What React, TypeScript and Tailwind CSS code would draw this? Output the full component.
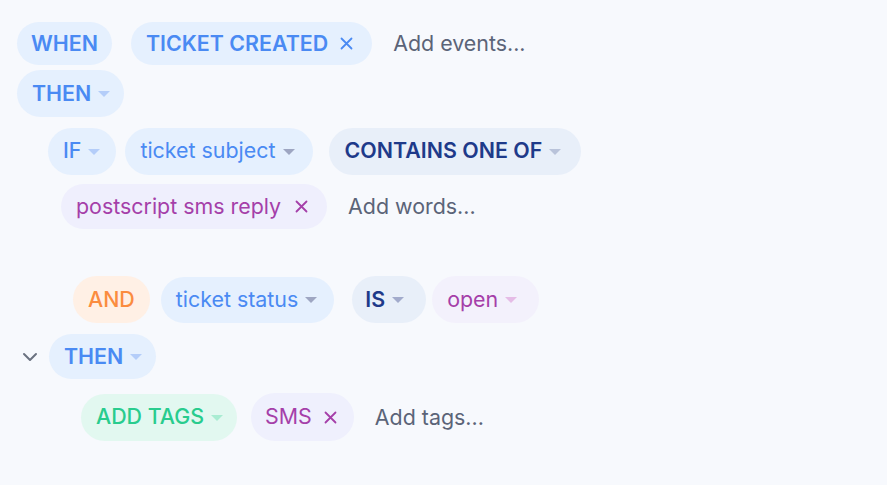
import React from "react";

const Caret = ({ color }: { color: string }) => (
  <svg width="12" height="6" viewBox="0 0 12 6" className="ml-[7px] mt-[1px]">
    <path d="M0 0 L12 0 L6 6 Z" fill={color} />
  </svg>
);

const X = ({ color, gap = "ml-[12px]" }: { color: string; gap?: string }) => (
  <svg width="13" height="13" viewBox="0 0 13 13" className={gap}>
    <path d="M1.5 1.5 L11.5 11.5 M11.5 1.5 L1.5 11.5" stroke={color} strokeWidth="1.8" strokeLinecap="round" />
  </svg>
);

type PillProps = {
  children: React.ReactNode;
  className: string;
};

const Pill = ({ children, className }: PillProps) => (
  <div className={"flex items-center rounded-full text-[21.4px] leading-none whitespace-nowrap " + className}>
    {children}
  </div>
);

export default function App() {
  return (
    <div className="min-h-screen w-full bg-[#f7f9fd] font-['Inter',sans-serif] pt-[22px] relative">
      {/* Row 1 */}
      <div className="flex items-center ml-[17px] h-[43px]">
        <Pill className="h-[43px] px-[14px] bg-[#e5f0fe] text-[#4a8af3] font-semibold">WHEN</Pill>
        <Pill className="ml-[19px] h-[43px] pl-[15px] pr-[19px] bg-[#e5f0fe] text-[#4a8af3] font-semibold">
          TICKET CREATED
          <X color="#4a8af3" />
        </Pill>
        <span className="ml-[21px] text-[21.4px] text-[#5b6478]">Add events...</span>
      </div>
      {/* Row 2 */}
      <div className="flex items-center ml-[17px] mt-[5px]">
        <Pill className="h-[47px] pl-[15px] pr-[14px] bg-[#e5f0fe] text-[#4a8af3] font-semibold">
          THEN
          <Caret color="#b4cdf9" />
        </Pill>
      </div>
      {/* Row 3 */}
      <div className="flex items-center ml-[48px] mt-[10px] h-[48px]">
        <Pill className="h-[47px] pl-[15px] pr-[16px] bg-[#e5f0fe] text-[#4a8af3] font-medium">
          IF
          <Caret color="#b4cdf9" />
        </Pill>
        <Pill className="ml-[9px] h-[47px] pl-[15px] pr-[18px] bg-[#e5f0fe] text-[#4a8af3] font-normal">
          ticket subject
          <Caret color="#9ea6c2" />
        </Pill>
        <Pill className="ml-[16px] h-[47px] pl-[16px] pr-[20px] bg-[#e8eff9] text-[#1e3a8a] font-semibold">
          CONTAINS ONE OF
          <Caret color="#b9c3da" />
        </Pill>
      </div>
      {/* Row 4 */}
      <div className="flex items-center ml-[61px] mt-[9px]">
        <Pill className="h-[45px] pl-[15px] pr-[19px] bg-[#efeffd] text-[#a53fa9] font-normal">
          postscript sms reply
          <X color="#a53fa9" gap="ml-[14px]" />
        </Pill>
        <span className="ml-[21px] text-[21.4px] text-[#5b6478]">Add words...</span>
      </div>
      {/* Row 5 */}
      <div className="flex items-center ml-[73px] mt-[47px]">
        <Pill className="h-[47px] px-[15px] bg-[#fff0e5] text-[#fb8c3f] font-medium">AND</Pill>
        <Pill className="ml-[11px] h-[46px] pl-[15px] pr-[17px] bg-[#e5f0fe] text-[#4a8af3] font-normal">
          ticket status
          <Caret color="#9ea6c2" />
        </Pill>
        <Pill className="ml-[18px] h-[47px] pl-[13px] pr-[22px] bg-[#e8eff9] text-[#1e3a8a] font-semibold">
          IS
          <Caret color="#a2abcc" />
        </Pill>
        <Pill className="ml-[6px] h-[47px] pl-[15px] pr-[22px] bg-[#f3f1fc] text-[#a53fa9] font-normal">
          open
          <Caret color="#e5bce6" />
        </Pill>
      </div>
      {/* Row 6 */}
      <div className="flex items-center ml-[22px] mt-[11px]">
        <svg width="16" height="10" viewBox="0 0 16 10" className="mr-[11px]">
          <path d="M2 2 L8 8 L14 2" stroke="#6b7280" strokeWidth="2" fill="none" strokeLinecap="round" strokeLinejoin="round" />
        </svg>
        <Pill className="h-[45px] pl-[15px] pr-[14px] bg-[#e5f0fe] text-[#4a8af3] font-semibold">
          THEN
          <Caret color="#b4cdf9" />
        </Pill>
      </div>
      {/* Row 7 */}
      <div className="flex items-center ml-[81px] mt-[14px]">
        <Pill className="h-[47px] pl-[15px] pr-[14px] bg-[#e2f8f0] text-[#29cc8e] font-medium">
          ADD TAGS
          <Caret color="#a9ecd2" />
        </Pill>
        <Pill className="ml-[14px] h-[48px] pl-[14px] pr-[17px] bg-[#eff0fd] text-[#a53fa9] font-normal">
          SMS
          <X color="#a53fa9" />
        </Pill>
        <span className="ml-[21px] text-[21.4px] text-[#5b6478]">Add tags...</span>
      </div>
    </div>
  );
}
